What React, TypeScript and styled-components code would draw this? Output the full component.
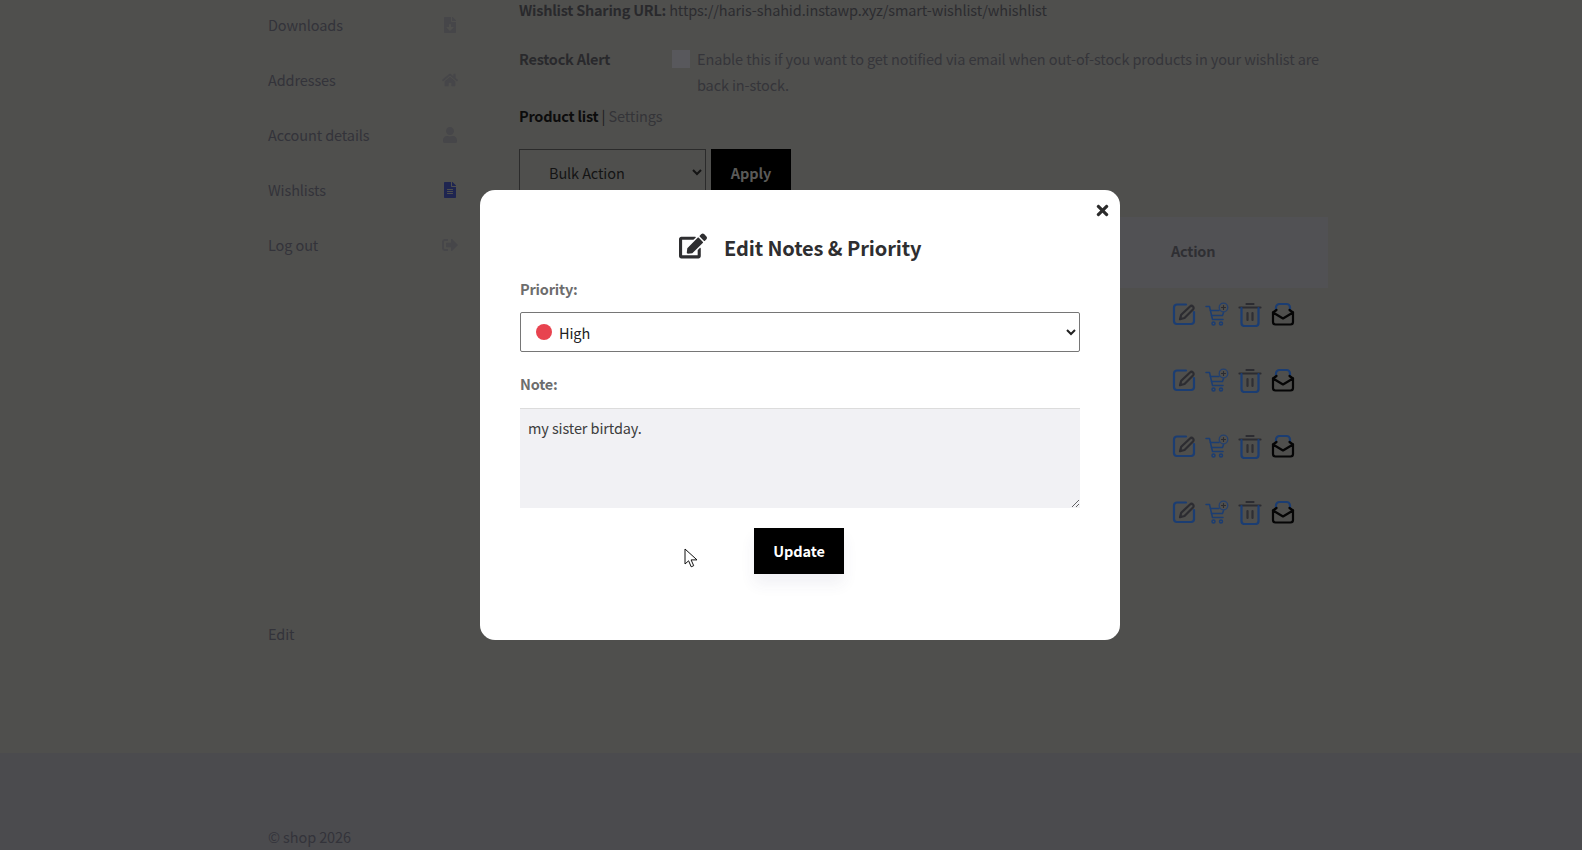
import React from "react";
import styled, { createGlobalStyle } from "styled-components";
import {
  FaEdit,
  FaFileAlt,
  FaFileDownload,
  FaHome,
  FaSignOutAlt,
  FaTimes,
  FaUser,
} from "react-icons/fa";

const GlobalStyle = createGlobalStyle`
  html, body {
    margin: 0;
    height: 100%;
    overflow: hidden;
    background: #4f4f4d;
  }
  * { box-sizing: border-box; }
  body, select, textarea, button {
    font-family: "Noto Sans CJK SC", "Noto Sans", sans-serif;
    letter-spacing: -0.11px;
  }
`;

const menu = [
  { label: "Downloads", icon: <FaFileDownload />, active: false },
  { label: "Addresses", icon: <FaHome />, active: false },
  { label: "Account details", icon: <FaUser />, active: false },
  { label: "Wishlists", icon: <FaFileAlt />, active: true },
  { label: "Log out", icon: <FaSignOutAlt />, active: false },
];

function PencilIcon() {
  return (
    <svg width="24" height="24" viewBox="0 0 24 24" fill="none" strokeWidth="2.200" strokeLinecap="round" strokeLinejoin="round">
      <path d="M14 2.500H5a3 3 0 0 0-3 3v13.500a3 3 0 0 0 3 3h14a3 3 0 0 0 3-3v-9" stroke="#1b3d72" />
      <path d="M18 4.500a2.100 2.100 0 0 1 3 3L12.500 16l-4.500 1.200 1.200-4.500z" stroke="#2c2c31" />
    </svg>
  );
}

function CartIcon() {
  return (
    <svg width="24" height="25" viewBox="0 0 24 25" fill="none" stroke="#1b3d72" strokeWidth="1.500" strokeLinecap="round" strokeLinejoin="round">
      <path d="M1 4.500h3.500l3 13h10.500" />
      <path d="M5.500 8.500h8.500M6.500 13.500h11l1-3" />
      <circle cx="8.500" cy="21.500" r="1.500" />
      <circle cx="16" cy="21.500" r="1.500" />
      <circle cx="18.500" cy="5.500" r="4.300" strokeWidth="1.300" stroke="#24406e" />
      <path d="M18.500 3.500v4M16.500 5.500h4" strokeWidth="1.100" stroke="#2c2c31" />
    </svg>
  );
}

function TrashIcon() {
  return (
    <svg width="24" height="25" viewBox="0 0 24 25" fill="none" strokeWidth="2.200" strokeLinecap="round" strokeLinejoin="round">
      <path d="M1.500 5.500h21M8.500 2h7" stroke="#2c2c31" />
      <path d="M3.500 6v15a3 3 0 0 0 3 3h11a3 3 0 0 0 3-3V6" stroke="#1b3d72" />
      <path d="M9.500 11v7M14.500 11v7" stroke="#2f2f34" />
    </svg>
  );
}

function MailIcon() {
  return (
    <svg width="24" height="25" viewBox="0 0 24 25" fill="none" strokeWidth="2.200" strokeLinecap="round" strokeLinejoin="round">
      <path d="M5 8V5.500a3.500 3.500 0 0 1 3.500-3.500h7A3.500 3.500 0 0 1 19 5.500V8" stroke="#1b3d72" />
      <path d="M2 10.500 5.500 8M22 10.500 18.500 8" stroke="#050505" />
      <path d="M2 10.500 12 16.500 22 10.500V20a2.500 2.500 0 0 1-2.500 2.500h-15A2.500 2.500 0 0 1 2 20z" stroke="#050505" />
    </svg>
  );
}

function CursorIcon() {
  return (
    <svg width="14" height="20" viewBox="0 0 14 20">
      <path d="M1 1v15l3.600-3.200 2.600 6 2.500-1.100-2.600-5.800H13z" fill="#fff" stroke="#111" strokeWidth="1" strokeLinejoin="round" />
    </svg>
  );
}

export default function App() {
  return (
    <>
      <GlobalStyle />
      <Page>
        <Content>
          <Sidebar>
            <MenuList>
              {menu.map((item) => (
                <MenuItem key={item.label}>
                  <span>{item.label}</span>
                  <MenuIcon $active={item.active}>{item.icon}</MenuIcon>
                </MenuItem>
              ))}
            </MenuList>
            <EditLink>Edit</EditLink>
          </Sidebar>
          <Main>
            <ShareLine>
              <strong>Wishlist Sharing URL:</strong> https://haris-shahid.instawp.xyz/smart-wishlist/whishlist
            </ShareLine>
            <RestockRow>
              <RestockLabel>Restock Alert</RestockLabel>
              <FakeCheck />
              <RestockText>
                Enable this if you want to get notified via email when out-of-stock products in your wishlist are back in-stock.
              </RestockText>
            </RestockRow>
            <TabLine>
              <strong>Product list</strong> <TabSep>|</TabSep> Settings
            </TabLine>
            <BulkRow>
              <BulkSelect defaultValue="bulk">
                <option value="bulk">Bulk Action</option>
              </BulkSelect>
              <ApplyButton>Apply</ApplyButton>
            </BulkRow>
            <TableHead>
              <ActionTitle>Action</ActionTitle>
            </TableHead>
            {[0, 1, 2, 3].map((row) => (
              <TableRow key={row}>
                <ActionCell>
                  <PencilIcon />
                  <CartIcon />
                  <TrashIcon />
                  <MailIcon />
                </ActionCell>
              </TableRow>
            ))}
          </Main>
        </Content>
        <Footer>
          <Copyright>© shop 2026</Copyright>
        </Footer>
      </Page>

      <Backdrop>
        <Modal>
          <CloseButton>
            <FaTimes />
          </CloseButton>
          <ModalTitle>
            <TitleIcon>
              <FaEdit />
            </TitleIcon>
            Edit Notes &amp; Priority
          </ModalTitle>
          <FieldLabel>Priority:</FieldLabel>
          <SelectWrap>
            <PriorityDot />
            <PrioritySelect defaultValue="high">
              <option value="high">High</option>
              <option value="medium">Medium</option>
              <option value="low">Low</option>
            </PrioritySelect>
          </SelectWrap>
          <NoteLabel>Note:</NoteLabel>
          <NoteArea defaultValue="my sister birtday." />
          <UpdateRow>
            <UpdateButton>Update</UpdateButton>
          </UpdateRow>
          <Cursor>
            <CursorIcon />
          </Cursor>
        </Modal>
      </Backdrop>
    </>
  );
}

const Page = styled.div`
  height: 850px;
  display: flex;
  flex-direction: column;
  font-size: 14.500px;
  line-height: 26px;
  color: #2f2f33;
`;

const Content = styled.div`
  height: 753px;
  padding-left: 268px;
  display: flex;
`;

const Sidebar = styled.aside`
  width: 251px;
  padding-right: 61px;
  display: flex;
  flex-direction: column;
`;

const MenuList = styled.div`
  display: flex;
  flex-direction: column;
  gap: 29px;
  padding-top: 12px;
`;

const MenuItem = styled.div`
  display: flex;
  justify-content: space-between;
  align-items: center;
  height: 26px;
  color: #33333a;
`;

const MenuIcon = styled.span<{ $active: boolean }>`
  display: flex;
  font-size: 16px;
  color: ${(p) => (p.$active ? "#1f2550" : "#464649")};
`;

const EditLink = styled.div`
  margin-top: 363px;
  color: #33333a;
`;

const Main = styled.main`
  width: 809px;
  display: flex;
  flex-direction: column;
  color: #2c2c30;
`;

const ShareLine = styled.div`
  height: 26px;
  margin-top: -3px;
  strong {
    font-weight: 600;
    letter-spacing: -0.24px;
    color: #29292c;
  }
`;

const RestockRow = styled.div`
  display: flex;
  margin-top: 23px;
`;

const RestockLabel = styled.div`
  width: 153px;
  flex-shrink: 0;
  font-weight: 600;
  letter-spacing: -0.24px;
  color: #29292c;
`;

const FakeCheck = styled.div`
  width: 18px;
  height: 18px;
  margin-top: 4px;
  background: #58585c;
  flex-shrink: 0;
`;

const RestockText = styled.div`
  margin-left: 7px;
  color: #35353a;
`;

const TabLine = styled.div`
  margin-top: 5px;
  color: #343438;
  strong {
    font-weight: 600;
    letter-spacing: -0.24px;
    color: #0c0c0c;
  }
`;

const TabSep = styled.span`
  color: #1c1c1c;
`;

const BulkRow = styled.div`
  display: flex;
  gap: 5px;
  margin-top: 20px;
`;

const BulkSelect = styled.select`
  width: 187px;
  height: 46px;
  padding: 0 0 0 25px;
  font-size: 14.500px;
  color: #141414;
  background: #4f4f4d;
  border: 1px solid #2b2b2b;
  border-radius: 0;
`;

const ApplyButton = styled.button`
  width: 80px;
  height: 46px;
  border: 0;
  background: #000;
  color: #5a5a58;
  font-size: 14.500px;
  font-weight: 600;
`;

const TableHead = styled.div`
  height: 71px;
  margin-top: 22px;
  padding-bottom: 4px;
  display: flex;
  align-items: center;
  justify-content: flex-end;
  background: #515154;
`;

const ActionTitle = styled.div`
  width: 157px;
  font-weight: 600;
  letter-spacing: -0.24px;
  color: #2f2f33;
`;

const TableRow = styled.div`
  height: 66px;
  display: flex;
  justify-content: flex-end;
`;

const ActionCell = styled.div`
  width: 157px;
  padding-left: 1px;
  padding-top: 14px;
  display: flex;
  align-items: flex-start;
  gap: 9px;
`;

const Footer = styled.footer`
  flex: 1;
  padding-left: 268px;
  display: flex;
  align-items: flex-end;
  background: #4b4b4e;
`;

const Copyright = styled.div`
  color: #33333a;
`;

const Backdrop = styled.div`
  position: fixed;
  inset: 0;
  padding: 190px 0 0 480px;
`;

const Modal = styled.div`
  position: relative;
  width: 640px;
  height: 450px;
  padding: 39px 40px 0;
  background: #fff;
  border-radius: 15px;
`;

const CloseButton = styled.button`
  position: absolute;
  top: 12px;
  right: 9px;
  padding: 0;
  display: flex;
  border: 0;
  background: none;
  color: #2b2b2b;
  font-size: 17px;
`;

const ModalTitle = styled.h2`
  margin: 0 0 0 159px;
  height: 36px;
  display: flex;
  align-items: center;
  font-size: 20px;
  font-weight: 600;
  color: #2e2e30;
`;

const TitleIcon = styled.span`
  display: flex;
  width: 45px;
  margin-top: -2px;
  font-size: 28px;
`;

const FieldLabel = styled.label`
  display: block;
  margin-top: 11px;
  line-height: 26px;
  font-size: 14.500px;
  font-weight: 600;
  letter-spacing: -0.2px;
  color: #6d6d6d;
`;

const NoteLabel = styled(FieldLabel)`
  margin-top: 19px;
`;

const SelectWrap = styled.div`
  position: relative;
  margin-top: 10px;
`;

const PriorityDot = styled.span`
  position: absolute;
  left: 16px;
  top: 12px;
  width: 16px;
  height: 16px;
  border-radius: 50%;
  background: #e8434f;
`;

const PrioritySelect = styled.select`
  display: block;
  width: 100%;
  height: 40px;
  padding: 0 0 0 34px;
  font-size: 14.500px;
  color: #222;
  background: transparent;
  border: 1px solid #767676;
  border-radius: 2px;
`;

const NoteArea = styled.textarea`
  display: block;
  width: 100%;
  height: 100px;
  margin-top: 11px;
  padding: 7px 8px;
  border: 0;
  border-top: 1px solid #dcdcdc;
  outline: none;
  background: #f1f1f4;
  font-size: 14.500px;
  line-height: 24px;
  color: #3d3d3d;
`;

const UpdateRow = styled.div`
  display: flex;
  justify-content: center;
  margin-top: 20px;
  padding-right: 2px;
`;

const UpdateButton = styled.button`
  width: 90px;
  height: 46px;
  padding: 0 0 2px;
  border: 0;
  background: #000;
  color: #fff;
  font-size: 14.500px;
  font-weight: 600;
  box-shadow: 0 10px 15px rgba(60, 60, 120, 0.07);
`;

const Cursor = styled.span`
  position: absolute;
  left: 204px;
  top: 358px;
  display: flex;
`;
